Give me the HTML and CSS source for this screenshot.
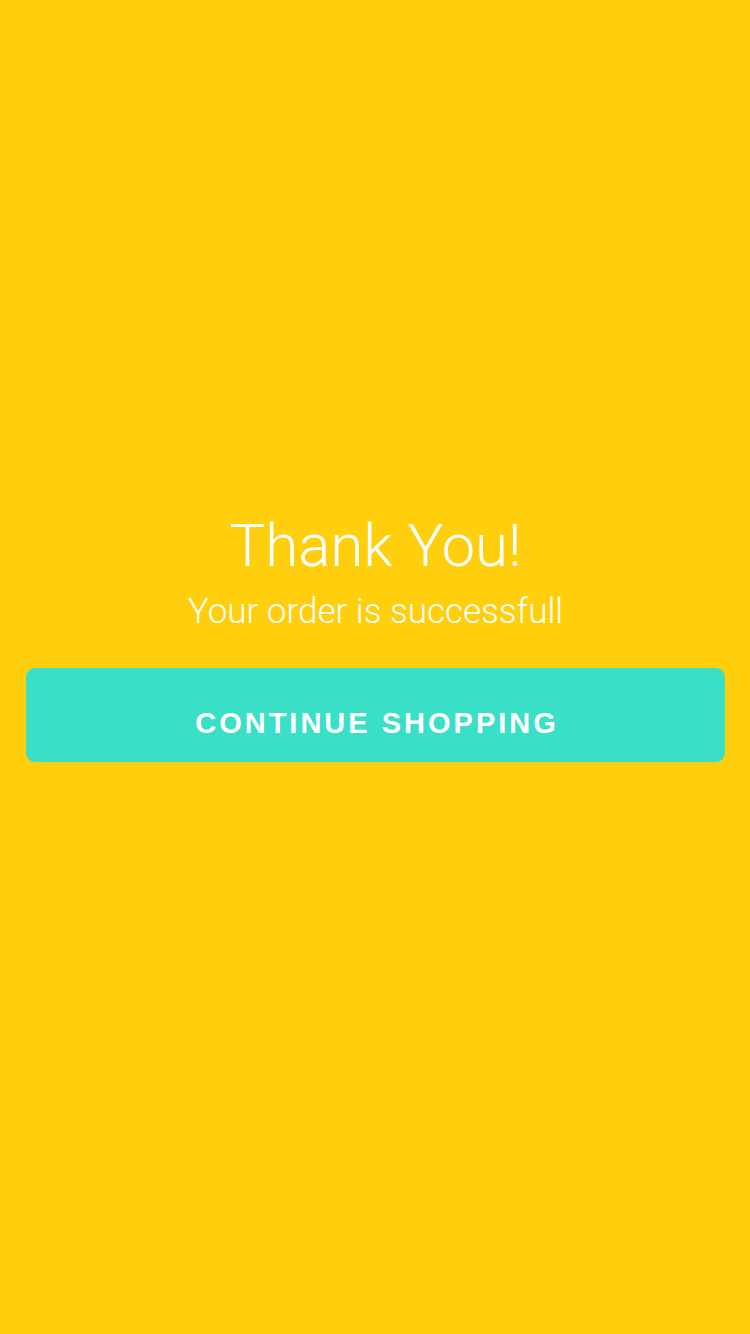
FILE: index.html
```html
<!DOCTYPE html>
<html>
<head>
<meta charset="utf-8">
<link rel="stylesheet" href="styles.css">
</head>
<body>
<main class="screen">
  <h1 class="title">Thank You!</h1>
  <p class="subtitle">Your order is successfull</p>
  <button class="cta">CONTINUE SHOPPING</button>
</main>
</body>
</html>
```
FILE: styles.css
```css
html, body {
  margin: 0;
  padding: 0;
}
body {
  background: #FFCE0D;
  font-family: "Liberation Sans", Arial, sans-serif;
}
.screen {
  height: 1334px;
  box-sizing: border-box;
  padding: 510px 25px 0 26px;
  display: flex;
  flex-direction: column;
  align-items: center;
}
.title {
  margin: 0;
  font-family: Roboto, "Liberation Sans", sans-serif;
  font-weight: 300;
  font-size: 60px;
  line-height: 72px;
  color: #fff;
}
.subtitle {
  margin: 8px 0 0;
  font-family: Roboto, "Liberation Sans", sans-serif;
  font-weight: 300;
  font-size: 35px;
  line-height: 44px;
  color: #fff;
}
.cta {
  margin-top: 34px;
  width: 100%;
  height: 94px;
  box-sizing: border-box;
  border: 0;
  border-radius: 9px;
  background: #3ADFC8;
  color: #fff;
  font-family: "Liberation Sans", Arial, sans-serif;
  font-weight: 700;
  font-size: 29px;
  letter-spacing: 3px;
  padding: 16px 0 0 3px;
}
```
